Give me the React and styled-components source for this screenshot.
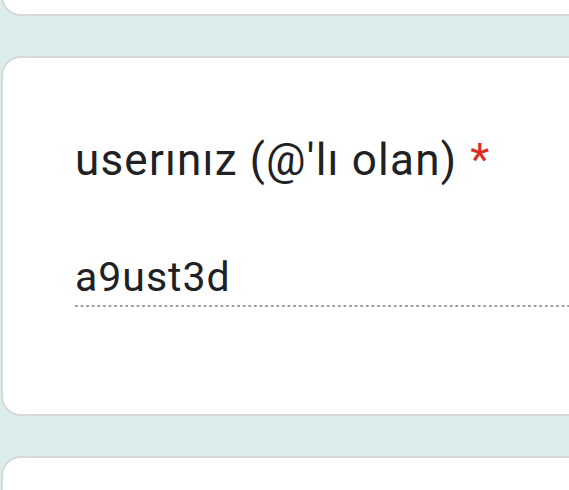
import React from 'react';
import styled, { createGlobalStyle } from 'styled-components';

const GlobalStyle = createGlobalStyle`
  html, body {
    margin: 0;
    background: #dbeeec;
  }
  body {
    font-family: Roboto, "Noto Sans", Arial, sans-serif;
  }
`;

const Viewport = styled.div`
  width: 569px;
  height: 490px;
  overflow: hidden;
`;

const Page = styled.div`
  display: flex;
  flex-direction: column;
  gap: 40px;
  margin-top: -84px;
  padding-left: 1px;
`;

const Card = styled.div`
  flex: none;
  box-sizing: border-box;
  width: calc(100% + 40px);
  height: ${({ h }) => h}px;
  background: #ffffff;
  border: 2px solid #d6d9dc;
  border-radius: 20px;
`;

const Question = styled(Card)`
  display: flex;
  flex-direction: column;
  padding: 78px 0 0 72px;
`;

const Label = styled.div`
  font-size: 44px;
  line-height: 48px;
  color: #202124;
  letter-spacing: 1.2px;
`;

const Star = styled.span`
  color: #d93025;
  margin-left: 13px;
`;

const Field = styled.div`
  margin-top: 70px;
  font-size: 41px;
  line-height: 46px;
  color: #202124;
  letter-spacing: 1px;
  padding-bottom: 7px;
  background-image: linear-gradient(to right, #9aa0a6 55%, transparent 55%);
  background-size: 5.6px 2px;
  background-repeat: repeat-x;
  background-position: left bottom;
`;

export default function App() {
  return (
    <Viewport>
      <GlobalStyle />
      <Page>
        <Card h={100} />
        <Question h={360}>
          <Label>
            userınız (@'lı olan)<Star>*</Star>
          </Label>
          <Field>a9ust3d</Field>
        </Question>
        <Card h={100} />
      </Page>
    </Viewport>
  );
}
